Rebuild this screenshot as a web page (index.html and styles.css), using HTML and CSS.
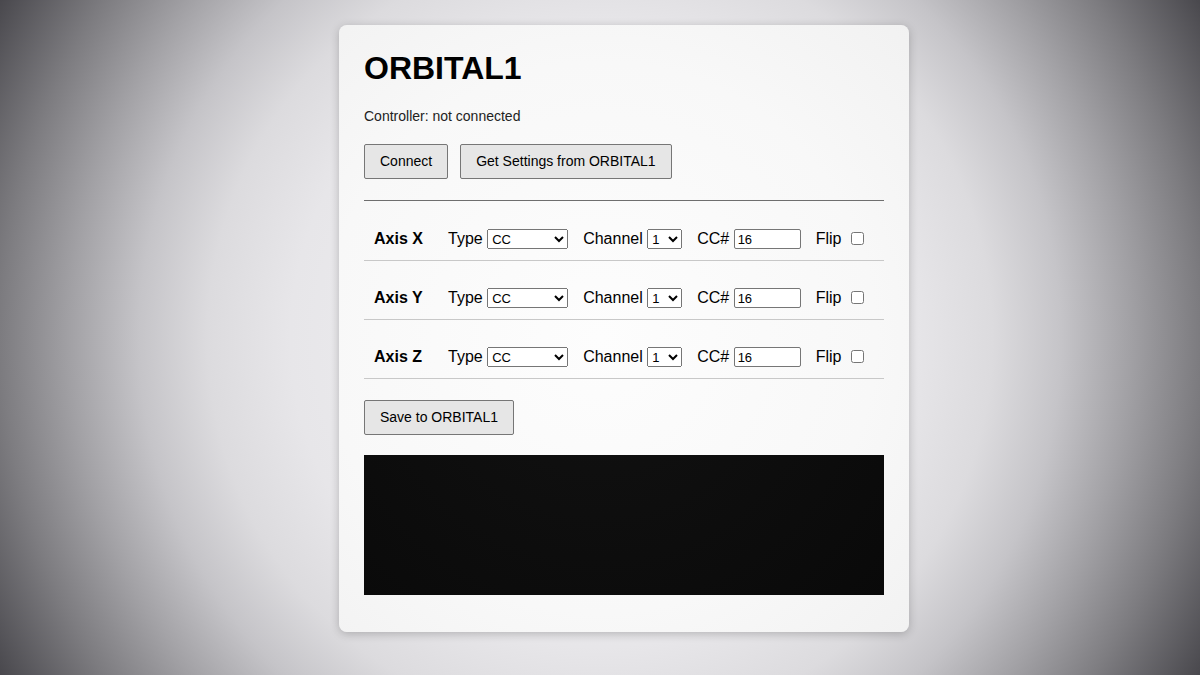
FILE: index.html
```html
<!DOCTYPE html>
<html lang="en">
<head>
    <meta charset="UTF-8">
    <meta name="viewport" content="width=device-width, initial-scale=1.0">
    <title>ORBITAL1 Editor</title>
    <link rel="stylesheet" href="styles.css">
</head>
<body>
    <div class="panel">
        <h1>ORBITAL1</h1>
        <p class="status">Controller: <span id="statusText">not connected</span></p>

        <div class="actions">
            <button class="btn" id="connectBtn">Connect</button>
            <button class="btn" id="getBtn">Get Settings from ORBITAL1</button>
        </div>

        <hr class="divider">

        <div class="axis-row">
            <span class="axis-name">Axis X</span>
            <label class="field">Type <select class="type-select">
                <option>CC</option>
                <option>Pitch Bend</option>
                <option>Aftertouch</option>
            </select></label>
            <label class="field">Channel <select class="channel-select">
                <option>1</option><option>2</option><option>3</option><option>4</option>
            </select></label>
            <label class="field">CC# <input class="cc-input" type="text" value="16"></label>
            <label class="field">Flip <input class="flip-box" type="checkbox"></label>
        </div>

        <div class="axis-row">
            <span class="axis-name">Axis Y</span>
            <label class="field">Type <select class="type-select">
                <option>CC</option>
                <option>Pitch Bend</option>
                <option>Aftertouch</option>
            </select></label>
            <label class="field">Channel <select class="channel-select">
                <option>1</option><option>2</option><option>3</option><option>4</option>
            </select></label>
            <label class="field">CC# <input class="cc-input" type="text" value="16"></label>
            <label class="field">Flip <input class="flip-box" type="checkbox"></label>
        </div>

        <div class="axis-row">
            <span class="axis-name">Axis Z</span>
            <label class="field">Type <select class="type-select">
                <option>CC</option>
                <option>Pitch Bend</option>
                <option>Aftertouch</option>
            </select></label>
            <label class="field">Channel <select class="channel-select">
                <option>1</option><option>2</option><option>3</option><option>4</option>
            </select></label>
            <label class="field">CC# <input class="cc-input" type="text" value="16"></label>
            <label class="field">Flip <input class="flip-box" type="checkbox"></label>
        </div>

        <button class="btn save-btn" id="saveBtn">Save to ORBITAL1</button>

        <canvas class="scope" id="scope" width="520" height="140"></canvas>
    </div>

    <script>
        const statusText = document.getElementById("statusText");
        const connectBtn = document.getElementById("connectBtn");

        connectBtn.addEventListener("click", async () => {
            if (!navigator.requestMIDIAccess) {
                statusText.textContent = "MIDI not supported";
                return;
            }
            try {
                const midi = await navigator.requestMIDIAccess({ sysex: true });
                statusText.textContent = midi.outputs.size ? "connected" : "not connected";
            } catch (e) {
                statusText.textContent = "not connected";
            }
        });
    </script>
</body>
</html>
```

FILE: styles.css
```css
* {
    box-sizing: border-box;
}

html {
    height: 100%;
}

body {
    margin: 0;
    min-height: 100%;
    padding: 25px 0 0 48px;
    display: flex;
    justify-content: center;
    align-items: flex-start;
    font-family: "Liberation Sans", Arial, sans-serif;
    color: #000;
    background: radial-gradient(circle farthest-corner at 50% 50%,
        #f3f3f5 0%, #e7e6e9 45%, #dcdbde 57%, #c5c4c8 67%,
        #a2a1a5 77%, #7d7c80 87%, #49484d 100%) fixed;
}

.panel {
    width: 570px;
    padding: 25px;
    border-radius: 8px;
    background: radial-gradient(circle farthest-corner at 50% 50%,
        #fdfdfd 0%, #f8f8f8 40%, #f1f1f1 65%, #e6e6e6 100%) fixed;
    box-shadow: 0 2px 10px rgba(0, 0, 0, 0.22);
}

h1 {
    margin: 0 0 22px;
    font-size: 32px;
    font-weight: 700;
    line-height: 36px;
}

.status {
    margin: 0;
    font-size: 14px;
    line-height: 16px;
    color: #222;
}

.actions {
    display: flex;
    gap: 12px;
    margin-top: 20px;
}

.btn {
    height: 35px;
    font-family: inherit;
    font-size: 14px;
    line-height: 17px;
    padding: 0 15px;
    color: #000;
    background: #e6e6e6;
    border: 1px solid #767676;
    border-radius: 2px;
    cursor: pointer;
}

.btn:hover {
    background: #dcdcdc;
}

/* 2px rule: dark top line, invisible bottom line */
.divider {
    margin: 21px 0 0;
    border: none;
    border-top: 1px solid #6e6e6e;
    border-bottom: 1px solid transparent;
}

.axis-row {
    display: flex;
    align-items: center;
    gap: 15px;
    margin-top: 14px;
    padding: 13px 10px 11px;
    height: 45px;
    border-bottom: 1px solid #c8c8c8;
    font-size: 16px;
}

.axis-name {
    width: 59px;
    font-weight: 700;
}

.field {
    display: flex;
    align-items: center;
    white-space: pre;
}

.type-select,
.channel-select,
.cc-input {
    font-family: inherit;
    font-size: 13px;
    height: 20px;
    color: #000;
}

.type-select {
    width: 81px;
}

.channel-select {
    width: 35px;
}

.cc-input {
    width: 67px;
    padding: 1px 3px;
    border: 1px solid #767676;
    border-radius: 2px;
    background: #fff;
}

.flip-box {
    width: 13px;
    height: 13px;
    margin: 0 0 2px 5px;
}

.save-btn {
    display: block;
    margin-top: 21px;
}

.scope {
    display: block;
    width: 520px;
    height: 140px;
    margin: 20px 0 12px;
    background: radial-gradient(circle farthest-corner at 50% 50%,
        #121212 0%, #0b0b0b 45%, #050505 80%, #000 100%) fixed;
}
```
